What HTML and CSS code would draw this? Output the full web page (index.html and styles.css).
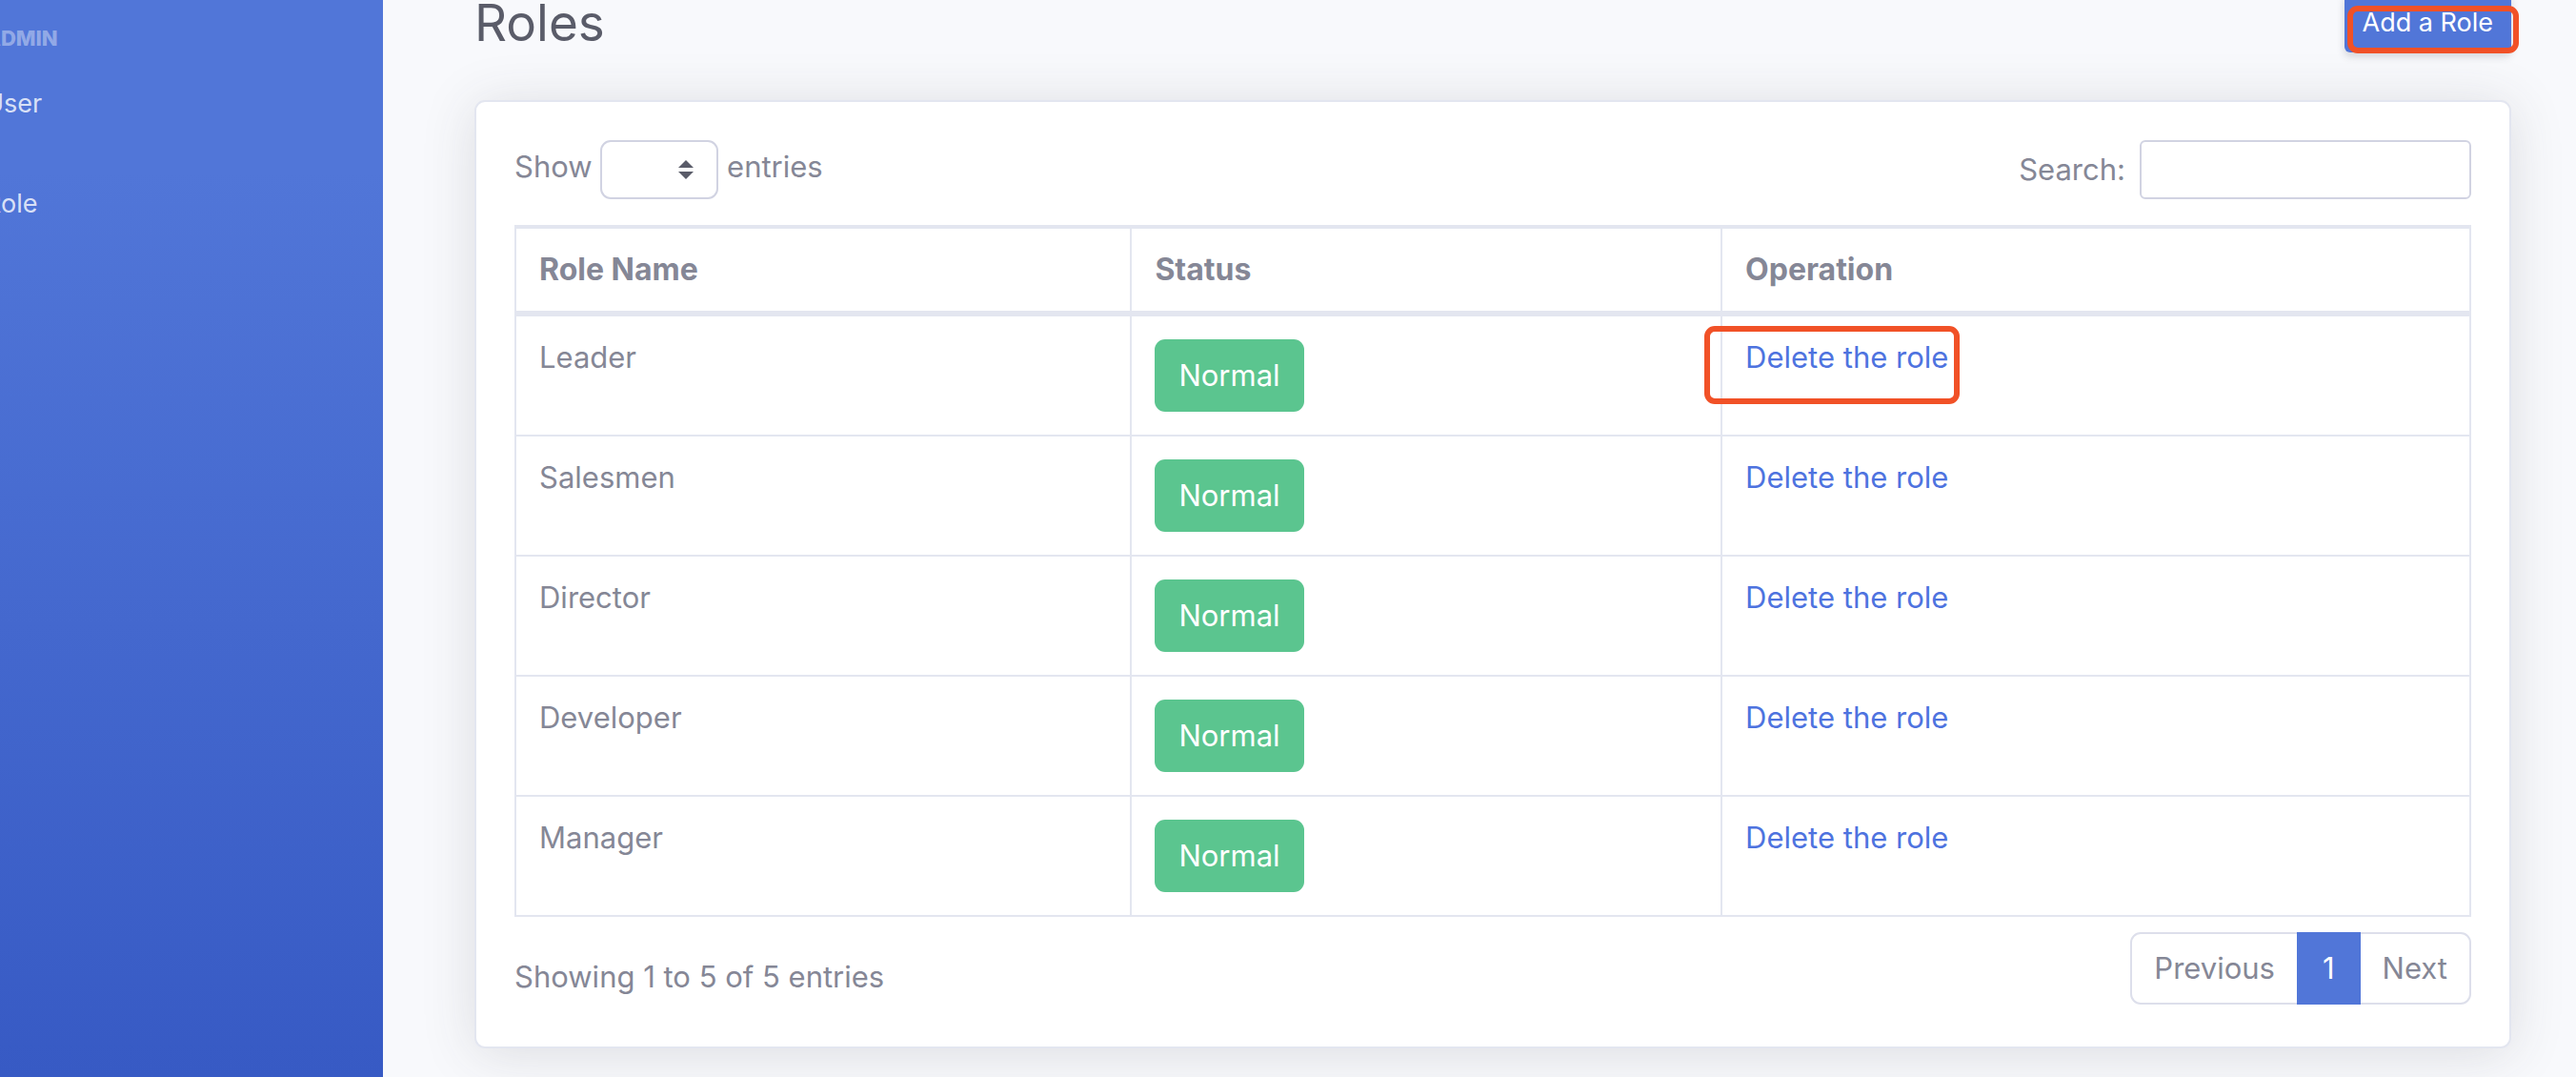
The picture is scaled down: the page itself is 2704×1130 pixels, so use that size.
FILE: index.html
```
<!DOCTYPE html>
<html lang="en">
<head>
<meta charset="utf-8">
<title>Roles</title>
<link rel="stylesheet" href="styles.css">
</head>
<body>
<div class="wrapper">
  <nav class="sidebar">
    <div class="sidebar-heading">Admin</div>
    <a class="sidebar-link" href="#user">User</a>
    <a class="sidebar-link" href="#role">Role</a>
  </nav>
  <main class="content">
    <header class="page-header">
      <h1>Roles</h1>
      <div class="marked">
        <button class="btn-add" type="button">Add a Role</button>
        <span class="marker marker-add"></span>
      </div>
    </header>
    <section class="card">
      <div class="controls">
        <label class="length">Show
          <span class="select-wrap"><select><option></option></select><svg class="caret" viewBox="0 0 16 20"><path d="M0 8 8 0l8 8zM0 12h16l-8 8z" fill="#5a5c69"/></svg></span>
          entries</label>
        <label class="search">Search:<input type="search"></label>
      </div>
      <table class="roles">
        <thead>
          <tr><th class="col-name">Role Name</th><th class="col-status">Status</th><th>Operation</th></tr>
        </thead>
        <tbody>
          <tr><td>Leader</td><td><button class="btn-status" type="button">Normal</button></td><td><span class="marked"><a href="#delete">Delete the role</a><span class="marker marker-delete"></span></span></td></tr>
          <tr><td>Salesmen</td><td><button class="btn-status" type="button">Normal</button></td><td><a href="#delete">Delete the role</a></td></tr>
          <tr><td>Director</td><td><button class="btn-status" type="button">Normal</button></td><td><a href="#delete">Delete the role</a></td></tr>
          <tr><td>Developer</td><td><button class="btn-status" type="button">Normal</button></td><td><a href="#delete">Delete the role</a></td></tr>
          <tr><td>Manager</td><td><button class="btn-status" type="button">Normal</button></td><td><a href="#delete">Delete the role</a></td></tr>
        </tbody>
      </table>
      <div class="table-footer">
        <div class="info">Showing 1 to 5 of 5 entries</div>
        <div class="pagination">
          <a href="#previous">Previous</a>
          <a class="active" href="#1">1</a>
          <a href="#next">Next</a>
        </div>
      </div>
    </section>
  </main>
</div>
</body>
</html>
```
FILE: styles.css
```
* {
  box-sizing: border-box;
}

body {
  margin: 0;
  background: #f8f9fc;
  color: #858796;
  font-family: Inter, "Liberation Sans", sans-serif;
  font-size: 31px;
  line-height: 38px;
}

a {
  color: #4e73df;
  text-decoration: none;
}

button,
input,
select {
  font: inherit;
}

.wrapper {
  display: flex;
  min-height: 100vh;
  overflow: hidden;
}

.sidebar {
  flex: 0 0 402px;
  display: flex;
  flex-direction: column;
  padding-top: 24px;
  background: linear-gradient(180deg, #5176d8 180px, #375ac4 100%);
}

.sidebar-heading,
.sidebar-link {
  margin-left: -16px;
}

.sidebar-heading {
  color: rgba(255, 255, 255, 0.4);
  font-size: 22px;
  font-weight: 800;
  line-height: 32px;
  text-transform: uppercase;
}

.sidebar-link {
  padding: 32px 0;
  color: rgba(255, 255, 255, 0.8);
  font-size: 27px;
  line-height: 41px;
}

.content {
  flex: 1;
  padding: 0 68px 24px 96px;
}

.page-header {
  display: flex;
  align-items: center;
  justify-content: space-between;
  margin: -7px 0 50px;
}

h1 {
  margin: 0;
  color: #5a5c69;
  font-size: 53px;
  font-weight: 400;
  line-height: 62px;
}

.marked {
  position: relative;
}

.marker {
  position: absolute;
  border: 6px solid #f15127;
  border-radius: 11px;
  pointer-events: none;
}

.marker-add {
  inset: 13px -8px -1px 3px;
}

.marker-delete {
  inset: -14px -12px -30px -43px;
}

.btn-add {
  display: block;
  padding: 10px 19px;
  border: 0;
  border-radius: 6px;
  background: #5176d8;
  box-shadow: 0 4px 8px rgba(58, 59, 69, 0.2);
  color: #fff;
  font-size: 27px;
  line-height: 42px;
}

.card {
  padding: 40px;
  border: 2px solid #e3e6f0;
  border-radius: 11px;
  background: #fff;
  box-shadow: 0 5px 56px rgba(58, 59, 69, 0.15);
}

.controls {
  display: flex;
  align-items: center;
  justify-content: space-between;
  margin-bottom: 27px;
}

.select-wrap {
  display: inline-block;
  position: relative;
  vertical-align: middle;
}

select,
input {
  display: block;
  height: 62px;
  border: 2px solid #d1d3e2;
  background: #fff;
}

select {
  width: 124px;
  border-radius: 11px;
  appearance: none;
}

input {
  width: 348px;
  border-radius: 6px;
}

.caret {
  position: absolute;
  top: 21px;
  right: 26px;
  width: 16px;
  height: 20px;
  pointer-events: none;
}

.search {
  display: flex;
  align-items: center;
  gap: 15px;
}

.roles {
  width: 100%;
  table-layout: fixed;
  border: 2px solid #e3e6f0;
  border-width: 4px 0 0 2px;
  border-spacing: 0;
}

.col-name {
  width: 31.5%;
}

.col-status {
  width: 30.2%;
}

th,
td {
  padding: 24px;
  border: 0 solid #e3e6f0;
  border-width: 0 2px 2px 0;
  text-align: left;
  vertical-align: top;
}

th {
  border-bottom-width: 6px;
  font-size: 32px;
  font-weight: 700;
}

td .marked {
  display: inline-block;
}

.btn-status {
  display: block;
  padding: 19px 25px;
  border: 0;
  border-radius: 11px;
  background: #5bc58f;
  color: #fff;
}

.table-footer {
  display: flex;
  justify-content: space-between;
  padding: 16px 0 4px;
}

.info {
  padding-top: 28px;
}

.pagination {
  display: flex;
  border: 2px solid #dddfeb;
  border-radius: 11px;
}

.pagination a {
  padding: 17px 23px;
  color: #858796;
}

.pagination .active {
  margin: -2px 0;
  padding: 19px 27px;
  background: #5176d8;
  color: #fff;
}
```
